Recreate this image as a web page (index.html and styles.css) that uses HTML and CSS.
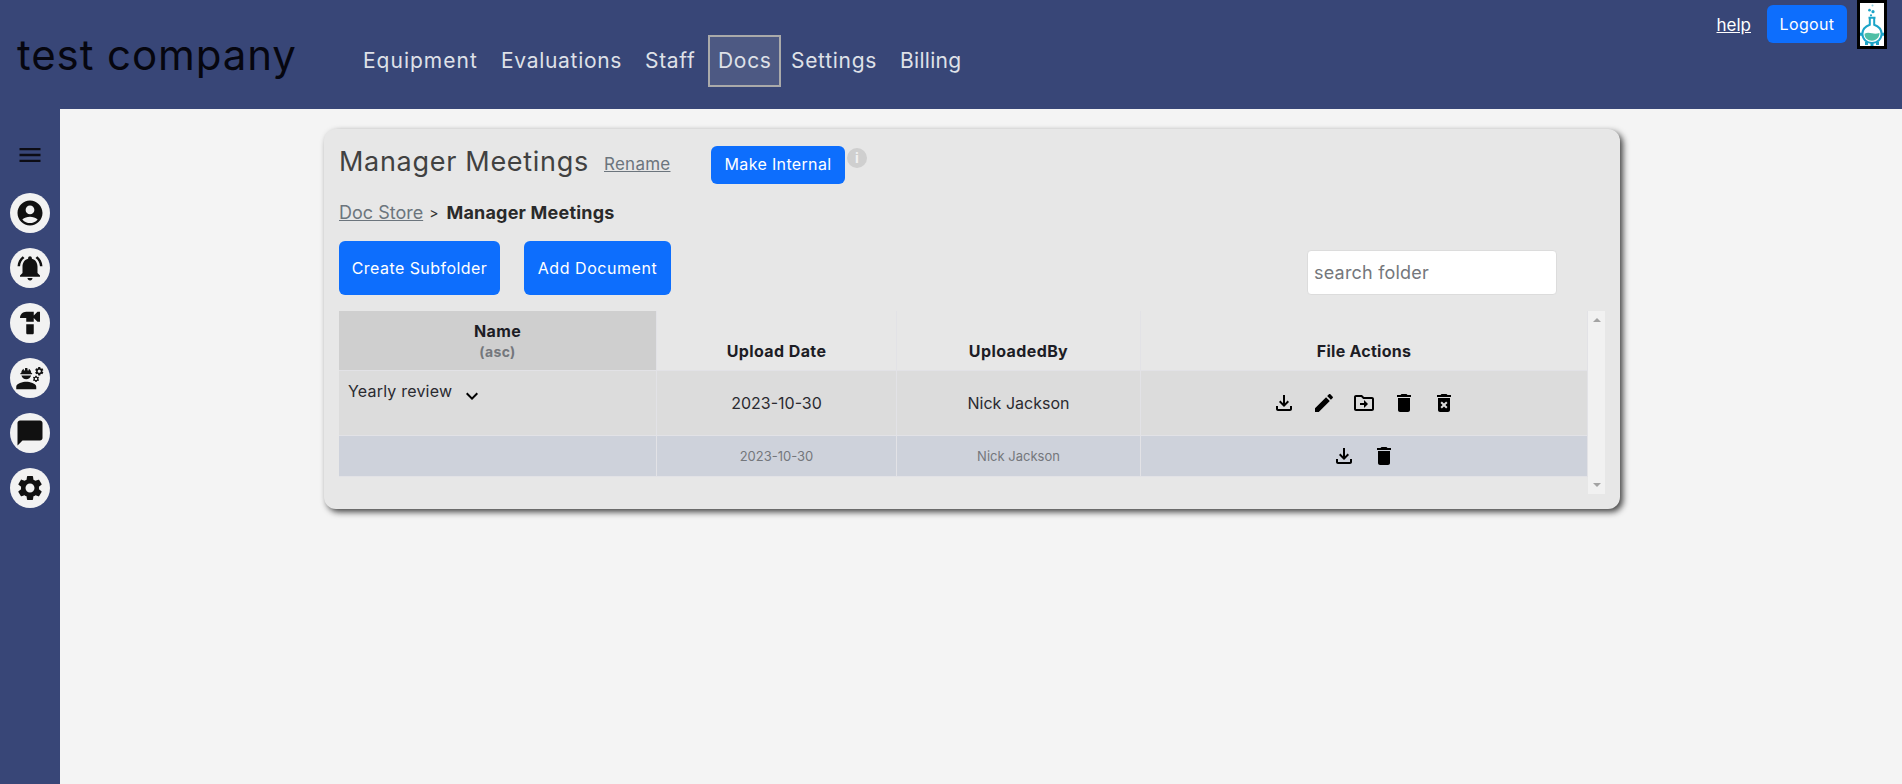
FILE: index.html
```html
<!DOCTYPE html>
<html lang="en">
<head>
<meta charset="utf-8">
<title>Manager Meetings</title>
<link rel="stylesheet" href="styles.css">
</head>
<body>
<svg class="defs" width="0" height="0" aria-hidden="true">
  <defs>
    <symbol id="i-gear" viewBox="0 0 24 24"><path d="M19.14 12.94c.04-.3.06-.61.06-.94 0-.32-.02-.64-.07-.94l2.03-1.58c.18-.14.23-.41.12-.61l-1.92-3.32c-.12-.22-.37-.29-.59-.22l-2.39.96c-.5-.38-1.03-.7-1.62-.94l-.36-2.54c-.04-.24-.24-.41-.48-.41h-3.84c-.24 0-.43.17-.47.41l-.36 2.54c-.59.24-1.13.57-1.62.94l-2.39-.96c-.22-.08-.47 0-.59.22L2.74 8.87c-.12.21-.08.47.12.61l2.03 1.58c-.05.3-.09.63-.09.94s.02.64.07.94l-2.03 1.58c-.18.14-.23.41-.12.61l1.92 3.32c.12.22.37.29.59.22l2.39-.96c.5.38 1.03.7 1.62.94l.36 2.54c.05.24.24.41.48.41h3.84c.24 0 .44-.17.47-.41l.36-2.54c.59-.24 1.13-.56 1.62-.94l2.39.96c.22.08.47 0 .59-.22l1.92-3.32c.12-.22.07-.47-.12-.61l-2.01-1.58zM12 15.6c-1.98 0-3.6-1.62-3.6-3.6s1.62-3.6 3.6-3.6 3.6 1.62 3.6 3.6-1.62 3.6-3.6 3.6z"/></symbol>
    <symbol id="i-download" viewBox="0 0 24 24"><path d="M18 15v3H6v-3H4v3c0 1.1.9 2 2 2h12c1.1 0 2-.9 2-2v-3h-2zm-1-4l-1.41-1.41L13 12.17V4h-2v8.17L8.41 9.59 7 11l5 5 5-5z"/></symbol>
    <symbol id="i-edit" viewBox="0 0 24 24"><path d="M3 17.25V21h3.75L17.81 9.94l-3.75-3.75L3 17.25zM20.71 7.04c.39-.39.39-1.02 0-1.41l-2.34-2.34c-.39-.39-1.02-.39-1.41 0l-1.83 1.83 3.75 3.75 1.83-1.83z"/></symbol>
    <symbol id="i-move" viewBox="0 0 24 24"><path d="M20 6h-8l-2-2H4c-1.11 0-1.99.89-1.99 2L2 18c0 1.11.89 2 2 2h16c1.11 0 2-.89 2-2V8c0-1.11-.89-2-2-2zm0 12H4V6h5.17l2 2H20v10zm-8-4H8v-2h4V9l4 4-4 4v-3z"/></symbol>
    <symbol id="i-delete" viewBox="0 0 24 24"><path d="M6 19c0 1.1.9 2 2 2h8c1.1 0 2-.9 2-2V7H6v12zM19 4h-3.5l-1-1h-5l-1 1H5v2h14V4z"/></symbol>
    <symbol id="i-forever" viewBox="0 0 24 24"><path d="M6 19c0 1.1.9 2 2 2h8c1.1 0 2-.9 2-2V7H6v12zm2.46-7.12l1.41-1.41L12 12.59l2.12-2.12 1.41 1.41L13.41 14l2.12 2.12-1.41 1.41L12 15.41l-2.12 2.12-1.41-1.41L10.59 14l-2.13-2.12zM15.5 4l-1-1h-5l-1 1H5v2h14V4z"/></symbol>
  </defs>
</svg>

<header class="topbar">
  <div class="company">test company</div>
  <nav class="mainnav">
    <a class="navlink nl-equipment">Equipment</a>
    <a class="navlink nl-evaluations">Evaluations</a>
    <a class="navlink nl-staff">Staff</a>
    <a class="navlink nl-docs active">Docs</a>
    <a class="navlink nl-settings">Settings</a>
    <a class="navlink nl-billing">Billing</a>
  </nav>
  <div class="topright">
    <a class="helplink">help</a>
    <button class="btn logout">Logout</button>
    <svg class="logo" viewBox="0 0 24 42" preserveAspectRatio="none" aria-label="logo">
      <g fill="none" stroke="#1ba4c8">
        <circle cx="12.500" cy="2.500" r="1" fill="#8fd0e0" stroke="none"/>
        <circle cx="9.500" cy="7" r="1.300" fill="#1ba4c8" stroke="none"/>
        <circle cx="13" cy="8.500" r="1.600" fill="#1ba4c8" stroke="none"/>
        <circle cx="11" cy="12" r="1.100" fill="#1ba4c8" stroke="none"/>
        <path d="M8.500 14.500h7M9.800 14.500v6.800C5.400 22.800 2.400 26.300 2.400 30.400 2.400 35.300 6.800 39 12 39s9.600-3.700 9.600-8.600c0-4.100-3-7.600-7.400-9.100v-6.800" stroke-width="2"/>
      </g>
      <path d="M4.600 30c2.200-1.500 5-1 7.400-.4s5 .6 7.400-.3c.4 3.800-3 7.500-7.400 7.500s-7.700-3-7.400-6.800z" fill="#4fbfa6"/>
      <g fill="#1ba4c8">
        <rect x="0" y="29" width="2" height="3"/><rect x="22" y="29" width="2" height="3"/>
        <rect x="5" y="38" width="3" height="3"/><rect x="16" y="38" width="3" height="3"/>
        <rect x="10.500" y="39" width="3" height="3"/>
      </g>
    </svg>
  </div>
</header>

<div class="shell">
  <aside class="sidebar">
    <button class="menubtn" aria-label="menu">
      <svg viewBox="0 0 24 24" class="menuicon"><path d="M3 18h18v-2H3v2zm0-5h18v-2H3v2zm0-7v2h18V6H3z"/></svg>
    </button>
    <a class="sidecircle"><svg viewBox="0 0 24 24"><path d="M12 2C6.48 2 2 6.48 2 12s4.48 10 10 10 10-4.48 10-10S17.52 2 12 2zm0 4c1.93 0 3.5 1.57 3.500 3.500S13.930 13 12 13s-3.500-1.570-3.500-3.500S10.070 6 12 6zm0 14c-2.030 0-4.430-.820-6.140-2.880C7.550 15.800 9.680 15 12 15s4.450.800 6.140 2.120C16.430 19.180 14.030 20 12 20z"/></svg></a>
    <a class="sidecircle"><svg viewBox="0 0 24 24"><path d="M7.580 4.080L6.150 2.650C3.750 4.480 2.170 7.300 2.030 10.500h2c.150-2.650 1.510-4.970 3.550-6.420zm12.390 6.420h2c-.150-3.200-1.730-6.020-4.120-7.850l-1.420 1.430c2.020 1.450 3.390 3.770 3.540 6.420zM18 11c0-3.070-1.640-5.640-4.500-6.320V4c0-.830-.670-1.500-1.500-1.500s-1.500.670-1.500 1.500v.680C7.630 5.360 6 7.920 6 11v5l-2 2v1h16v-1l-2-2v-5zm-6 11c.140 0 .270-.010.400-.040.650-.140 1.180-.580 1.440-1.180.100-.240.150-.500.150-.780h-4c.010 1.100.900 2 2.010 2z"/></svg></a>
    <a class="sidecircle"><svg viewBox="0 0 24 24"><path d="M18 3l-3 3V3H9C6.240 3 4 5.240 4 8h5v3h6V8l3 3h2V3h-2zM9 13v7c0 .550.450 1 1 1h4c.550 0 1-.450 1-1v-7H9z"/></svg></a>
    <a class="sidecircle"><svg viewBox="0 0 24 24"><path d="M9 15c-2.670 0-8 1.340-8 4v2h16v-2c0-2.660-5.330-4-8-4zM4.740 9h8.530c.270 0 .490-.220.490-.490v-.020c0-.270-.220-.490-.490-.490H13c0-1.480-.810-2.750-2-3.450v.950c0 .280-.220.500-.500.500s-.500-.220-.500-.500V4.140C9.680 4.060 9.350 4 9 4s-.680.060-1 .140V5.500c0 .280-.220.500-.500.500S7 5.780 7 5.500v-.950C5.810 5.250 5 6.520 5 8h-.260c-.270 0-.490.220-.490.490v.030c0 .260.220.480.490.480zM9 13c1.860 0 3.410-1.280 3.860-3H5.140c.450 1.720 2 3 3.860 3z"/><use href="#i-gear" x="15.200" y="2.400" width="8.400" height="8.400"/><use href="#i-gear" x="13.700" y="9.600" width="6.200" height="6.200"/></svg></a>
    <a class="sidecircle"><svg viewBox="0 0 24 24"><path d="M20 2H4c-1.100 0-2 .900-2 2v18l4-4h14c1.100 0 2-.900 2-2V4c0-1.100-.900-2-2-2z"/></svg></a>
    <a class="sidecircle"><svg viewBox="0 0 24 24"><use href="#i-gear"/></svg></a>
  </aside>

  <main class="content">
    <section class="card">
      <div class="titlerow">
        <h1 class="doctitle">Manager Meetings</h1>
        <a class="rename">Rename</a>
        <button class="btn internal">Make Internal</button>
        <span class="info">i</span>
      </div>
      <div class="crumbs">
        <a class="crumblink">Doc Store</a>
        <span class="sep">&gt;</span>
        <strong class="crumbcur">Manager Meetings</strong>
      </div>
      <div class="toolbar">
        <button class="btn big sub">Create Subfolder</button>
        <button class="btn big add">Add Document</button>
        <input class="search" type="text" placeholder="search folder">
      </div>
      <div class="tablewrap">
        <div class="tablearea">
          <div class="row headrow">
            <div class="cell c-name sorted"><span class="hname">Name</span><span class="hasc">(asc)</span></div>
            <div class="cell c-date">Upload Date</div>
            <div class="cell c-user">UploadedBy</div>
            <div class="cell c-act">File Actions</div>
          </div>
          <div class="row filerow">
            <div class="cell c-name"><span class="fname">Yearly review</span><svg class="chev" viewBox="0 0 24 24"><path d="M16.590 8.590L12 13.170 7.410 8.590 6 10l6 6 6-6z"/></svg></div>
            <div class="cell c-date">2023-10-30</div>
            <div class="cell c-user">Nick Jackson</div>
            <div class="cell c-act">
              <div class="actions">
                <svg class="ic"><use href="#i-download"/></svg>
                <svg class="ic"><use href="#i-edit"/></svg>
                <svg class="ic"><use href="#i-move"/></svg>
                <svg class="ic"><use href="#i-delete"/></svg>
                <svg class="ic"><use href="#i-forever"/></svg>
              </div>
            </div>
          </div>
          <div class="row verrow">
            <div class="cell c-name"></div>
            <div class="cell c-date">2023-10-30</div>
            <div class="cell c-user">Nick Jackson</div>
            <div class="cell c-act">
              <div class="actions">
                <svg class="ic"><use href="#i-download"/></svg>
                <svg class="ic"><use href="#i-delete"/></svg>
              </div>
            </div>
          </div>
        </div>
        <div class="scrollbar"><span class="arrow up"></span><span class="arrow down"></span></div>
      </div>
    </section>
  </main>
</div>
</body>
</html>
```

FILE: styles.css
```css
* { box-sizing: border-box; }
html, body { margin: 0; height: 100%; overflow: hidden; }
body { font-family: Inter, "Noto Sans", sans-serif; background: #f4f4f4; color: #212529; }
.defs { position: absolute; }
a { text-decoration: none; }

.topbar { height: 109px; background: #384677; display: flex; align-items: flex-start; }
.company { margin: 26px 0 0 17px; width: 336px; font-size: 42px; line-height: 58px; color: #06060f; letter-spacing: .9px; white-space: nowrap; }
.mainnav { display: flex; margin-top: 35px; }
.navlink { border: 2px solid transparent; padding: 0 8px; height: 52px; line-height: 48px; font-size: 21px; letter-spacing: .7px; color: #dfe1e8; white-space: nowrap; }
.nl-equipment { width: 138px; letter-spacing: 1px; }
.nl-evaluations { width: 144px; }
.nl-staff { width: 73px; }
.nl-docs { width: 73px; }
.nl-settings { width: 109px; }
.nl-billing { width: 91px; letter-spacing: .3px; }
.navlink.active { background: #4d5983; border-color: #aaa; }
.topright { margin-left: auto; display: flex; align-items: flex-start; }
.helplink { color: #fff; font-size: 17px; text-decoration: underline; margin: 13px 16px 0 0; line-height: 24px; }
.btn { border: 0; background: #0d6efd; color: #fff; font-family: inherit; border-radius: 6px; font-size: 16px; cursor: pointer; padding: 0; letter-spacing: .35px; }
.logout { width: 80px; height: 38px; margin-top: 5px; }
.logo { width: 30px; height: 49px; margin: 0 15px 0 10px; background: #fff; border: 3px solid #000; }

.shell { display: flex; height: calc(100% - 109px); }
.sidebar { width: 60px; background: #384677; display: flex; flex-direction: column; align-items: center; padding-top: 32px; gap: 15px; }
.menubtn { width: 28px; height: 28px; padding: 0; border: 0; background: none; margin-bottom: 9px; }
.menuicon { width: 28px; height: 28px; display: block; fill: #0c0c14; }
.sidecircle { width: 40px; height: 40px; border-radius: 50%; background: #f2f2f2; display: flex; align-items: center; justify-content: center; }
.sidecircle svg { width: 30px; height: 30px; fill: #111; }

.content { flex: 1; padding: 20px 0 0 264px; }
.card { width: 1296px; height: 380px; background: #e7e7e7; border-radius: 12px; padding: 17px 15px 0; box-shadow: 3px 3px 6px #444; }

.titlerow { display: flex; align-items: flex-start; height: 38px; }
.doctitle { margin: 0; font-size: 27px; font-weight: 400; line-height: 32px; letter-spacing: .7px; color: #414141; white-space: nowrap; width: 265px; }
.rename { font-size: 17px; line-height: 36px; letter-spacing: .25px; color: #6c757d; text-decoration: underline; width: 107px; }
.internal { width: 134px; height: 38px; padding-bottom: 2px; }
.info { width: 20px; height: 20px; margin: 2px 0 0 2px; border-radius: 50%; background: #cfcfcf; color: #f2f2f2; font-size: 14px; font-weight: 700; text-align: center; line-height: 20px; }

.crumbs { display: flex; align-items: center; height: 24px; margin-top: 17px; font-size: 18px; line-height: 24px; }
.crumblink { color: #6c757d; text-decoration: underline; }
.sep { font-size: 14px; margin: 0 8px 0 6px; color: #333; }
.crumbcur { color: #2a2a2a; font-weight: 700; letter-spacing: .2px; }

.toolbar { display: flex; align-items: flex-end; height: 54px; margin-top: 16px; }
.big { height: 54px; }
.sub { width: 161px; letter-spacing: .45px; }
.add { width: 147px; margin-left: 24px; letter-spacing: .55px; }
.search { width: 250px; height: 45px; margin-left: 636px; border: 1px solid #dcdcdc; border-radius: 4px; background: #fff; padding: 0 6px; font-family: inherit; font-size: 18px; letter-spacing: .2px; }
.search::placeholder { color: #74777c; opacity: 1; }

.tablewrap { display: flex; margin-top: 16px; height: 183px; }
.tablearea { width: 1249px; }
.row { display: flex; }
.cell { border: 1px solid #e2e2e6; border-left-width: 0; border-top-width: 0; display: flex; align-items: center; justify-content: center; text-align: center; }
.c-name { width: 318px; }
.c-date { width: 240px; }
.c-user { width: 244px; }
.c-act { width: 447px; }

.headrow { height: 60px; background: #e7e7e7; font-size: 16px; font-weight: 700; letter-spacing: .4px; color: #1d1d25; }
.headrow .c-act { letter-spacing: .25px; }
.headrow .cell { align-items: flex-end; padding-bottom: 9px; }
.headrow .sorted { background: #cfcfcf; flex-direction: column; align-items: center; justify-content: flex-start; padding: 9px 0 0; }
.hname { line-height: 22px; }
.hasc { font-size: 14px; line-height: 20px; color: #74777c; }

.filerow { height: 65px; background: #dcdcdc; font-size: 16px; color: #2a2a30; }
.filerow .c-name { justify-content: flex-start; align-items: flex-start; padding: 8px 0 0 9px; }
.fname { line-height: 24px; letter-spacing: .2px; }
.chev { width: 24px; height: 24px; margin: 5px 0 0 8px; fill: #000; }
.verrow { height: 41px; background: #ced2db; font-size: 13px; color: #74777c; }

.actions { display: flex; gap: 16px; }
.ic { width: 24px; height: 24px; fill: #000; display: block; }

.scrollbar { width: 17px; height: 183px; background: #f1f1f1; position: relative; }
.arrow { position: absolute; left: 5px; width: 0; height: 0; border-left: 4px solid transparent; border-right: 4px solid transparent; }
.up { top: 7px; border-bottom: 4px solid #a3a3a3; }
.down { bottom: 7px; border-top: 4px solid #a3a3a3; }
```
